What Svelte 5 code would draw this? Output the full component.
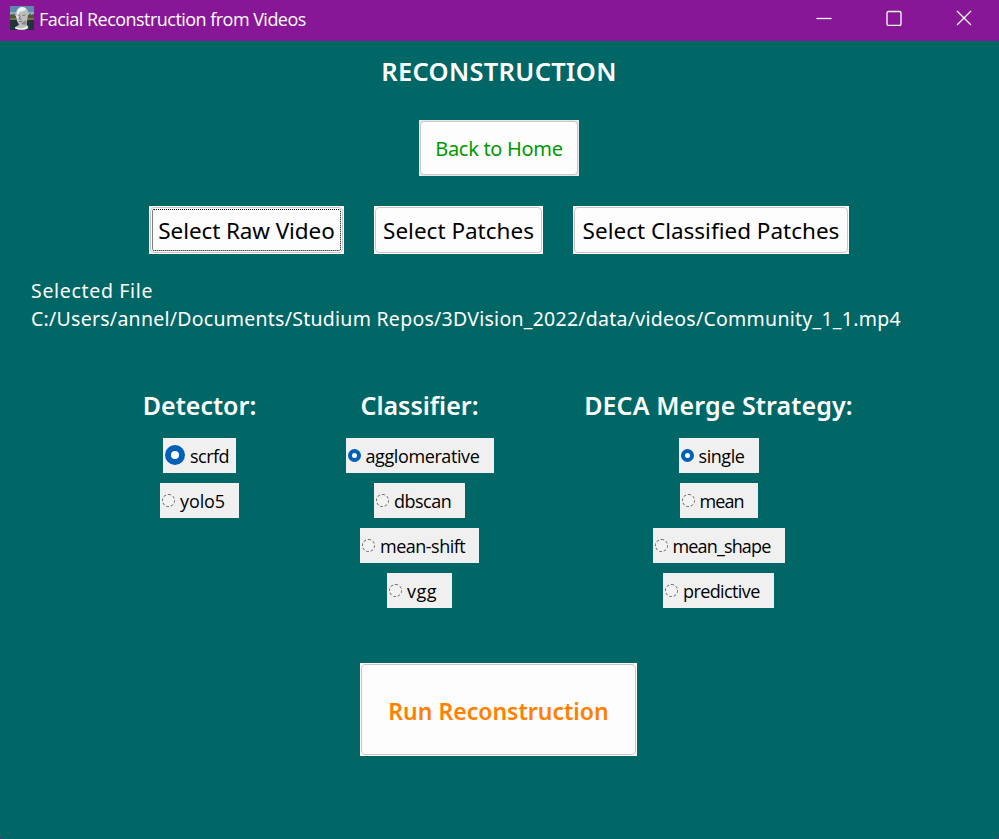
<script>
  const groups = [
    {
      name: 'detector',
      title: 'Detector:',
      options: [
        { label: 'scrfd', width: 73, tracking: -0.5, checked: true, large: true },
        { label: 'yolo5', width: 79, tracking: -0.1 }
      ]
    },
    {
      name: 'classifier',
      title: 'Classifier:',
      options: [
        { label: 'agglomerative', width: 148, tracking: -0.4, checked: true },
        { label: 'dbscan', width: 91, tracking: -0.5 },
        { label: 'mean-shift', width: 119, tracking: -0.5 },
        { label: 'vgg', width: 65, tracking: 0.5 }
      ]
    },
    {
      name: 'merge',
      title: 'DECA Merge Strategy:',
      options: [
        { label: 'single', width: 80, tracking: -0.45, checked: true },
        { label: 'mean', width: 78, tracking: -0.9 },
        { label: 'mean_shape', width: 132, tracking: -0.85 },
        { label: 'predictive', width: 111, tracking: -0.6 }
      ]
    }
  ];
</script>

<div class="window">
  <header>
    <svg class="app-icon" width="24" height="24" viewBox="0 0 24 24">
      <rect width="24" height="12" fill="#8fb0bf" />
      <rect width="24" height="6" fill="#5f88ac" />
      <rect y="12" width="24" height="12" fill="#20343a" />
      <path d="M0 9l2-1 1 1 1-2 1 3 3-1v5H0zM17 9h2l1-2 1 2 3-1v6h-7z" fill="#4e5737" />
      <path d="M0 13h6M17 13h7" stroke="#a48d62" />
      <path d="M5 22c1-2 3-2 4-3.500L7.500 16C6 13 5.500 9 6.500 5 8 1 11 .4 14 1.200c4 1 5 5 4 8l-1 6c-.3 2-.6 3 .2 4 1 1 1.500 2 .8 3-3 2-10 2-13 0z" fill="#bdbdbd" />
      <path d="M7 5c2-5 7-5 9-2-1 3-5 1-7 4l-1 6-1.500-2z" fill="#f0f0f0" />
      <path d="M7.500 9l2.500.4M12.500 9.500l3-.5M10 10l-.5 3h2M9 15.500h3.500" stroke="#666" fill="none" stroke-width=".8" />
      <path d="M11 18l5-4-.5 5z" fill="#858585" />
      <path d="M5 21c4 2 9 2 12-1l1 2c-3 2-10 2-13 0z" fill="#fafafa" />
    </svg>
    <span class="app-title">Facial Reconstruction from Videos</span>
    <div class="controls">
      <svg width="16" height="16" viewBox="0 0 16 16"><path d="M.5 8.500h15" /></svg>
      <svg width="16" height="16" viewBox="0 0 16 16"><rect x="1" y="1.500" width="14" height="14" rx="1.500" /></svg>
      <svg width="16" height="16" viewBox="0 0 16 16"><path d="M1 1l14 14M15 1L1 15" /></svg>
    </div>
  </header>

  <main>
    <h1>RECONSTRUCTION</h1>
    <button class="home"><span>Back to Home</span></button>

    <div class="sources">
      <button class="raw"><span>Select Raw Video</span></button>
      <button class="patches"><span>Select Patches</span></button>
      <button class="classified"><span>Select Classified Patches</span></button>
    </div>

    <div class="file">
      <div class="file-label">Selected File</div>
      <div class="file-path">C:/Users/annel/Documents/Studium Repos/3DVision_2022/data/videos/Community_1_1.mp4</div>
    </div>

    <div class="groups">
      {#each groups as group}
        <section class={group.name}>
          <h2>{group.title}</h2>
          {#each group.options as option}
            <label style:width="{option.width}px" style:letter-spacing="{option.tracking}px">
              <input type="radio" name={group.name} checked={option.checked} class:large={option.large} />
              <span>{option.label}</span>
            </label>
          {/each}
        </section>
      {/each}
    </div>

    <button class="run"><span>Run Reconstruction</span></button>
  </main>
</div>

<style>
  :global(body) {
    margin: 0;
    background: #881798;
  }
  .window {
    width: 999px;
    height: 839px;
    box-sizing: border-box;
    display: flex;
    flex-direction: column;
    overflow: hidden;
    background: #006766;
    border-radius: 0 0 3px 3px;
    font-family: "Noto Sans", sans-serif;
    color: #fff;
    white-space: nowrap;
  }
  header {
    height: 41px;
    flex: none;
    box-sizing: border-box;
    display: flex;
    align-items: center;
    padding: 0 27px 5px 10px;
    background: #881798;
  }
  .app-title {
    margin-left: 5px;
    font: 18px/24px "Open Sans", sans-serif;
    letter-spacing: -0.53px;
    padding-top: 2px;
  }
  .controls {
    margin-left: auto;
    display: flex;
    gap: 54px;
  }
  .controls svg {
    fill: none;
    stroke: #fff;
    stroke-width: 1.3;
  }
  main {
    display: flex;
    flex-direction: column;
    align-items: center;
    margin-right: 1px;
  }
  h1,
  h2 {
    margin: 0;
    font-size: 25px;
    font-weight: 600;
    line-height: 34px;
  }
  h1 {
    margin-top: 13px;
    font-size: 25.500px;
    letter-spacing: 0.3px;
  }
  button {
    box-sizing: border-box;
    height: 48px;
    padding: 1px;
    border: 0;
    background: #fff;
    color: #000;
    font: 22.500px/30px "Noto Sans", sans-serif;
  }
  button span {
    box-sizing: border-box;
    height: 100%;
    display: flex;
    align-items: center;
    justify-content: center;
    padding-top: 2px;
    border: 1px solid #c8c8c8;
    border-radius: 4px;
    background: #fdfdfd;
  }
  .home {
    width: 160px;
    height: 56px;
    margin-top: 32px;
    background: #e6e6e6;
    color: #009900;
    font-size: 20px;
    letter-spacing: -0.3px;
  }
  .sources {
    display: flex;
    gap: 30px;
    margin-top: 30px;
  }
  .raw {
    width: 195px;
    letter-spacing: -0.1px;
  }
  .raw span {
    outline: 1px dotted #000;
    outline-offset: -3px;
  }
  .patches {
    width: 169px;
  }
  .classified {
    width: 276px;
  }
  .file {
    align-self: stretch;
    margin-top: 23px;
    padding-left: 31px;
    font-size: 19.500px;
    line-height: 28px;
  }
  .file-label {
    letter-spacing: 0.68px;
  }
  .file-path {
    letter-spacing: 0.26px;
  }
  .groups {
    align-self: stretch;
    display: flex;
    margin-top: 55px;
    padding-left: 100px;
    height: 220px;
  }
  section {
    flex: none;
    display: flex;
    flex-direction: column;
    align-items: center;
    gap: 10px;
    width: 199px;
  }
  .classifier {
    width: 241px;
  }
  .merge {
    width: 357px;
  }
  h2 {
    margin-bottom: 6px;
  }
  .merge h2 {
    letter-spacing: 0.1px;
  }
  label {
    box-sizing: border-box;
    height: 35px;
    display: flex;
    align-items: center;
    gap: 5px;
    padding-left: 2px;
    background: #f0f0f0;
    color: #000;
    font: 18px/24px "Open Sans", sans-serif;
  }
  label span {
    padding-top: 1px;
  }
  input {
    appearance: none;
    box-sizing: border-box;
    flex: none;
    width: 13px;
    height: 13px;
    margin: 0;
    border: 1px dashed #666;
    border-radius: 50%;
    background: #f3f3f3;
  }
  input:checked {
    border: 4px solid #005fb8;
    background: #fff;
  }
  input.large {
    width: 20px;
    height: 20px;
    margin-bottom: 1px;
    border-width: 6px;
  }
  .run {
    width: 277px;
    height: 93px;
    margin-top: 55px;
    margin-right: 1px;
    color: #ff8000;
    font-size: 23px;
    font-weight: 600;
  }
</style>
